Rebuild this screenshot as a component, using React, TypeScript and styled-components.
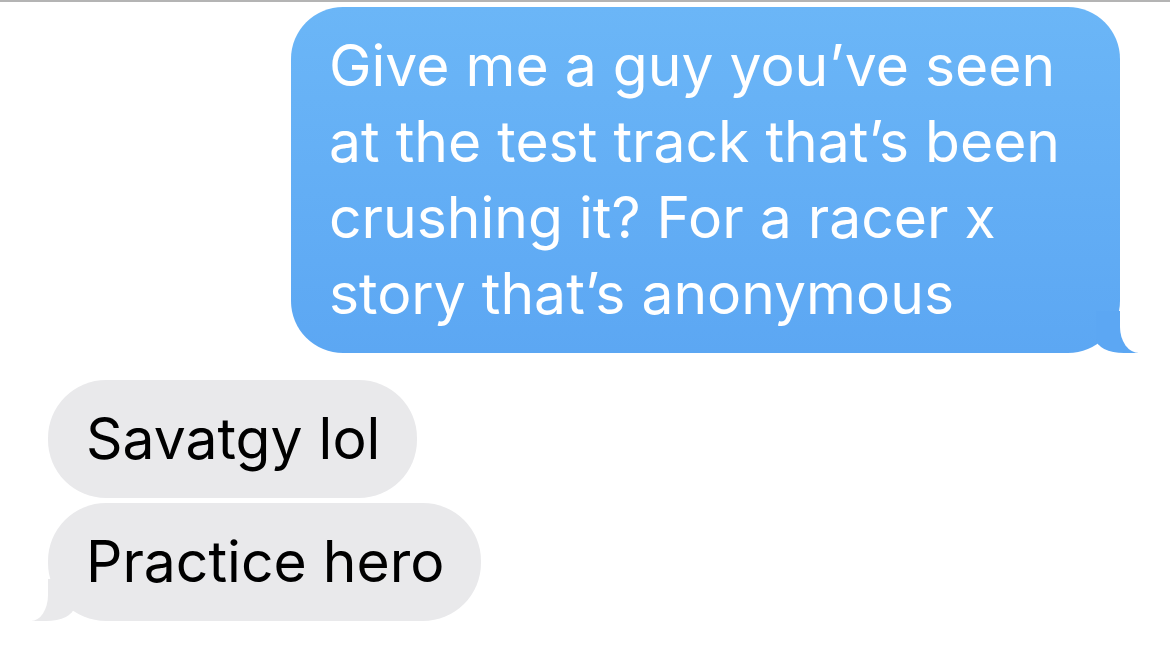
import React, { FC } from "react";
import styled, { createGlobalStyle, css } from "styled-components";

const GlobalStyle = createGlobalStyle`
  html, body {
    margin: 0;
    padding: 0;
    background: #ffffff;
  }
  body {
    font-family: Inter, "Noto Sans", "Liberation Sans", sans-serif;
    -webkit-font-smoothing: antialiased;
  }
`;

const Screen = styled.main`
  width: 1170px;
  height: 661px;
  box-sizing: border-box;
  border-top: 2px solid #b4b4b4;
  padding: 5px 50px 0 48px;
  display: flex;
  flex-direction: column;
  overflow: hidden;
`;

const Group = styled.section<{ $side: "sent" | "received" }>`
  display: flex;
  flex-direction: column;
  align-items: ${({ $side }) => ($side === "sent" ? "flex-end" : "flex-start")};
  gap: 5px;
  margin-bottom: 27px;
`;

const blueTail = css`
  &::before {
    content: "";
    position: absolute;
    bottom: 0;
    right: -18px;
    width: 42px;
    height: 42px;
    background: #5ca7f3;
    border-bottom-left-radius: 28px 14px;
  }
  &::after {
    content: "";
    position: absolute;
    bottom: 0;
    right: -40px;
    width: 40px;
    height: 44px;
    background: #ffffff;
    border-bottom-left-radius: 19px 26px;
  }
`;

const grayTail = css`
  &::before {
    content: "";
    position: absolute;
    bottom: 0;
    left: -16px;
    width: 42px;
    height: 42px;
    background: #e9e9eb;
    border-bottom-right-radius: 28px 14px;
  }
  &::after {
    content: "";
    position: absolute;
    bottom: 0;
    left: -40px;
    width: 40px;
    height: 44px;
    background: #ffffff;
    border-bottom-right-radius: 17px 26px;
  }
`;

const Bubble = styled.p<{ $side: "sent" | "received"; $tail?: boolean }>`
  position: relative;
  margin: 0;
  box-sizing: border-box;
  font-size: 57px;
  line-height: 76px;
  border-radius: 52px;
  z-index: 0;

  ${({ $side }) =>
    $side === "sent"
      ? css`
          width: 829px;
          padding: 21px 28px 21px 38px;
          color: #ffffff;
          background: linear-gradient(180deg, #6bb6f7 0%, #5ca7f3 100%);
        `
      : css`
          padding: 21px 37px 21px 38px;
          color: #000000;
          background: #e9e9eb;
          border-radius: 58px;
        `}

  ${({ $side, $tail }) => $tail && ($side === "sent" ? blueTail : grayTail)}

  &::before, &::after {
    z-index: -1;
  }
`;

const Text = styled.span`
  position: relative;
  z-index: 1;
`;

interface MessageProps {
  side: "sent" | "received";
  text: string;
  tail?: boolean;
}

const Message: FC<MessageProps> = ({ side, text, tail }) => (
  <Bubble $side={side} $tail={tail}>
    <Text>{text}</Text>
  </Bubble>
);

export default function App() {
  return (
    <>
      <GlobalStyle />
      <Screen>
        <Group $side="sent">
          <Message
            side="sent"
            tail
            text="Give me a guy you’ve seen at the test track that’s been crushing it? For a racer x story that’s anonymous"
          />
        </Group>
        <Group $side="received">
          <Message side="received" text="Savatgy lol" />
          <Message side="received" tail text="Practice hero" />
        </Group>
      </Screen>
    </>
  );
}
